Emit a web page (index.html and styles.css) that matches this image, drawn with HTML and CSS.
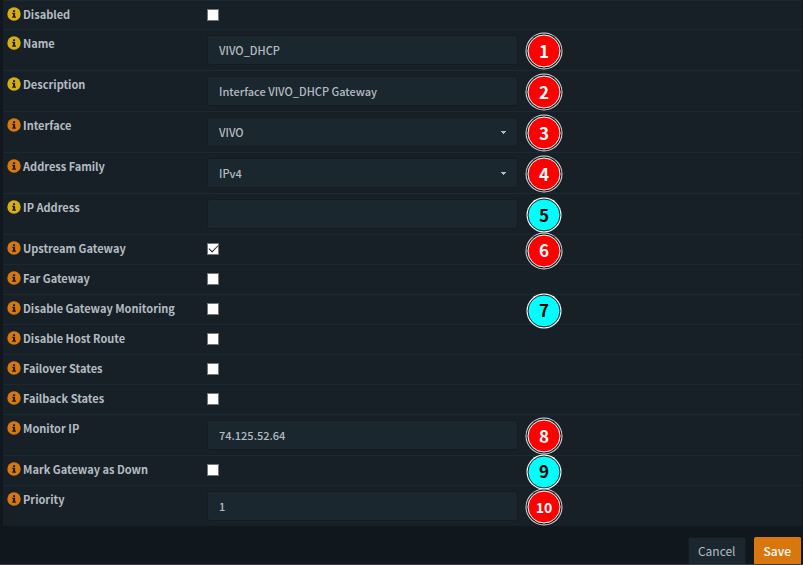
FILE: index.html
```html
<!DOCTYPE html>
<html lang="en">
<head>
<meta charset="utf-8">
<title>Gateway</title>
<link rel="stylesheet" href="styles.css">
</head>
<body>
<svg class="sprite" aria-hidden="true">
  <symbol id="info" viewBox="0 0 14 14">
    <circle cx="7" cy="7" r="6.7" fill="currentColor"/>
    <path d="M6 3.3h2.1v1.6H6zM5.2 5.8h2.9v3.6h.9v1.3H5.1V9.4h.9V7.1h-.8z" fill="#182027"/>
  </symbol>
</svg>
<form class="gateway">
  <div class="panel">
    <div class="row"><label class="name" for="disabled"><svg class="info yellow"><use href="#info"/></svg>Disabled</label><div class="value"><input type="checkbox" id="disabled"></div></div>
    <div class="row tall"><label class="name" for="gwname"><svg class="info yellow"><use href="#info"/></svg>Name</label><div class="value"><input class="field" type="text" id="gwname" value="VIVO_DHCP"><span class="badge">1</span></div></div>
    <div class="row tall"><label class="name" for="descr"><svg class="info yellow"><use href="#info"/></svg>Description</label><div class="value"><input class="field" type="text" id="descr" value="Interface VIVO_DHCP Gateway"><span class="badge">2</span></div></div>
    <div class="row tall"><label class="name" for="iface"><svg class="info"><use href="#info"/></svg>Interface</label><div class="value"><select class="field" id="iface"><option>VIVO</option></select><span class="badge">3</span></div></div>
    <div class="row tall"><label class="name" for="family"><svg class="info"><use href="#info"/></svg>Address Family</label><div class="value"><select class="field" id="family"><option>IPv4</option></select><span class="badge">4</span></div></div>
    <div class="row tall"><label class="name" for="ip"><svg class="info yellow"><use href="#info"/></svg>IP Address</label><div class="value"><input class="field" type="text" id="ip"><span class="badge optional">5</span></div></div>
    <div class="row"><label class="name" for="upstream"><svg class="info"><use href="#info"/></svg>Upstream Gateway</label><div class="value"><input type="checkbox" id="upstream" checked><span class="badge">6</span></div></div>
    <div class="row"><label class="name" for="far"><svg class="info"><use href="#info"/></svg>Far Gateway</label><div class="value"><input type="checkbox" id="far"></div></div>
    <div class="row"><label class="name" for="nomonitor"><svg class="info"><use href="#info"/></svg>Disable Gateway Monitoring</label><div class="value"><input type="checkbox" id="nomonitor"><span class="badge optional">7</span></div></div>
    <div class="row"><label class="name" for="noroute"><svg class="info"><use href="#info"/></svg>Disable Host Route</label><div class="value"><input type="checkbox" id="noroute"></div></div>
    <div class="row"><label class="name" for="failover"><svg class="info"><use href="#info"/></svg>Failover States</label><div class="value"><input type="checkbox" id="failover"></div></div>
    <div class="row"><label class="name" for="failback"><svg class="info"><use href="#info"/></svg>Failback States</label><div class="value"><input type="checkbox" id="failback"></div></div>
    <div class="row tall"><label class="name" for="monitor"><svg class="info"><use href="#info"/></svg>Monitor IP</label><div class="value"><input class="field" type="text" id="monitor" value="74.125.52.64"><span class="badge">8</span></div></div>
    <div class="row"><label class="name" for="down"><svg class="info"><use href="#info"/></svg>Mark Gateway as Down</label><div class="value"><input type="checkbox" id="down"><span class="badge optional">9</span></div></div>
    <div class="row tall"><label class="name" for="priority"><svg class="info"><use href="#info"/></svg>Priority</label><div class="value"><input class="field" type="text" id="priority" value="1"><span class="badge small">10</span></div></div>
  </div>
  <div class="actions">
    <button class="button" type="button">Cancel</button>
    <button class="button primary" type="submit">Save</button>
  </div>
</form>
</body>
</html>
```
FILE: styles.css
```css
* { box-sizing: border-box; }
body {
  margin: 0;
  background: #10181e;
  color: #b4bcc2;
  font: 11px/16px "Noto Sans CJK SC", sans-serif;
}
.sprite { position: absolute; width: 0; height: 0; }
.gateway { min-height: 100vh; border-bottom: 1px solid #3c3c3e; }
.panel { margin: 0 1px 0 3px; background: #182027; }
.row {
  display: grid;
  grid-template-columns: 200px 1fr;
  border-top: 1px solid #1b2930;
  padding: 5px 4px;
}
.name {
  display: flex;
  align-items: center;
  align-self: start;
  gap: 2px;
  height: 16px;
  font-weight: 700;
  white-space: nowrap;
}
.info { width: 14px; height: 14px; color: #d9770f; }
.yellow { color: #d6ae12; }
.value {
  position: relative;
  display: flex;
  align-items: flex-start;
  max-width: 311px;
}
.row:not(.tall) { height: 30px; }
.row:first-child { height: 29px; }
input[type="checkbox"] {
  appearance: none;
  display: grid;
  width: 12px;
  height: 12px;
  margin: 3px 0;
  border: 1px solid #767676;
  background: #fff;
}
input[type="checkbox"]:checked::before {
  content: "";
  width: 8px;
  height: 4px;
  margin: 2px 1px;
  border: solid #222;
  border-width: 0 0 1px 1px;
  transform: translateY(-1px) rotate(-45deg);
}
.field {
  width: 100%;
  height: 30px;
  padding: 0 11px;
  border: 1px solid #151b1f;
  border-radius: 3px;
  background: #1b272e;
  color: inherit;
  font: inherit;
  font-weight: 500;
}
select.field {
  appearance: none;
  background: #1b272e conic-gradient(from -45deg at 50% 100%, #b4bcc2 90deg, transparent 0) right 11px center / 6px 3px no-repeat;
}
.badge {
  position: absolute;
  top: calc(50% + 1px);
  right: -26px;
  display: grid;
  place-items: center;
  width: 33px;
  height: 33px;
  padding-bottom: 2px;
  border: 1px solid #fff;
  border-radius: 50%;
  background: #f00;
  color: #fff;
  font: 700 17px/20px "Noto Sans CJK SC", sans-serif;
  box-shadow: 0 0 0 1px #182027, 0 0 0 2px #ddd;
  transform: translate(50%, -50%);
  z-index: 1;
}
.optional { background: #0ff; color: #000; border-color: #182027; box-shadow: 0 0 0 1px #fff; }
.small { font-size: 14px; }
.actions { display: flex; justify-content: flex-end; gap: 8px; padding: 11px 2px 0 0; }
.button {
  height: 27px;
  padding: 0 9px;
  border: 1px solid #151b1f;
  border-bottom: 0;
  border-radius: 2px 2px 0 0;
  background: #1b272e;
  color: inherit;
  font: inherit;
  font-size: 12px;
}
.primary { border-color: #d9770f; background: #d9770f; color: #fff; font-weight: 500; }
```
